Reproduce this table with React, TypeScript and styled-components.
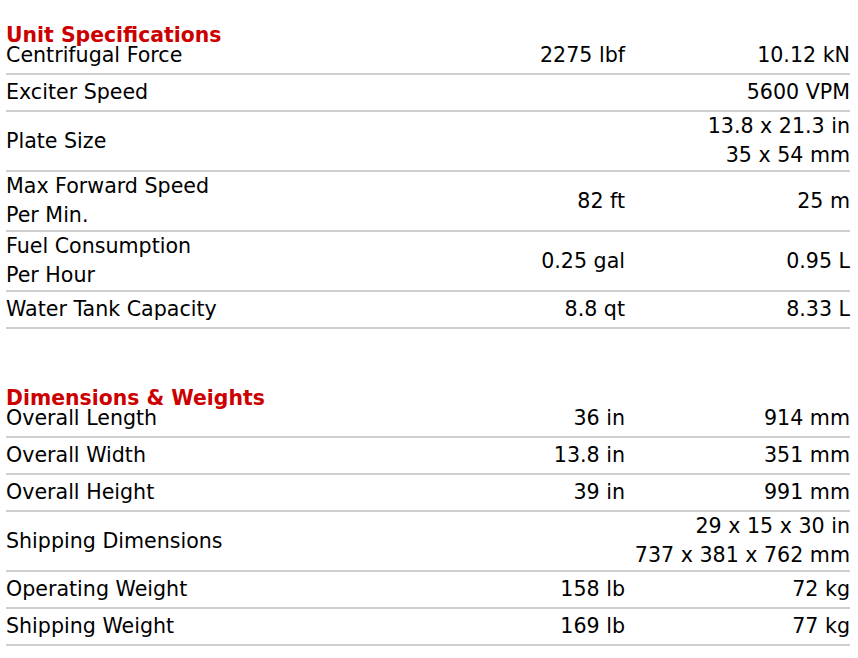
import styled, { createGlobalStyle } from 'styled-components';

const GlobalStyle = createGlobalStyle`
  body {
    margin: 0;
    background: #ffffff;
    font-family: "DejaVu Sans", Verdana, sans-serif;
    color: #000000;
  }
`;

const Page = styled.div`
  padding: 26px 8px 0 6px;
`;

const Section = styled.section`
  & + & {
    margin-top: 60px;
  }
`;

const Title = styled.h2`
  margin: 0;
  font-size: 20.4px;
  font-weight: bold;
  line-height: 18px;
  height: 12px;
  color: #cc0000;
`;

const Row = styled.div`
  display: grid;
  grid-template-columns: minmax(0, 1fr) 200px 225px;
  align-items: center;
  min-height: 35px;
  border-bottom: 2px solid #cfcfcf;
  font-size: 20.6px;
  line-height: 29px;
`;

const Label = styled.div`
  text-align: left;
`;

const Value = styled.div<{ $span?: boolean }>`
  text-align: right;
  grid-column: ${(p) => (p.$span ? '2 / 4' : 'auto')};
`;

type Spec = {
  label: string[];
  imperial?: string;
  metric?: string;
  combined?: string[];
};

const unitSpecs: Spec[] = [
  { label: ['Centrifugal Force'], imperial: '2275 lbf', metric: '10.12 kN' },
  { label: ['Exciter Speed'], combined: ['5600 VPM'] },
  { label: ['Plate Size'], combined: ['13.8 x 21.3 in', '35 x 54 mm'] },
  { label: ['Max Forward Speed', 'Per Min.'], imperial: '82 ft', metric: '25 m' },
  { label: ['Fuel Consumption', 'Per Hour'], imperial: '0.25 gal', metric: '0.95 L' },
  { label: ['Water Tank Capacity'], imperial: '8.8 qt', metric: '8.33 L' },
];

const dimensions: Spec[] = [
  { label: ['Overall Length'], imperial: '36 in', metric: '914 mm' },
  { label: ['Overall Width'], imperial: '13.8 in', metric: '351 mm' },
  { label: ['Overall Height'], imperial: '39 in', metric: '991 mm' },
  { label: ['Shipping Dimensions'], combined: ['29 x 15 x 30 in', '737 x 381 x 762 mm'] },
  { label: ['Operating Weight'], imperial: '158 lb', metric: '72 kg' },
  { label: ['Shipping Weight'], imperial: '169 lb', metric: '77 kg' },
];

const Lines = ({ lines }: { lines: string[] }) => (
  <>
    {lines.map((l, i) => (
      <div key={i}>{l}</div>
    ))}
  </>
);

const SpecTable = ({ title, rows }: { title: string; rows: Spec[] }) => (
  <Section>
    <Title>{title}</Title>
    {rows.map((r) => (
      <Row key={r.label.join(' ')}>
        <Label>
          <Lines lines={r.label} />
        </Label>
        {r.combined ? (
          <Value $span>
            <Lines lines={r.combined} />
          </Value>
        ) : (
          <>
            <Value>{r.imperial}</Value>
            <Value>{r.metric}</Value>
          </>
        )}
      </Row>
    ))}
  </Section>
);

const App = () => {
  return (
    <>
      <GlobalStyle />
      <Page>
        <SpecTable title="Unit Specifications" rows={unitSpecs} />
        <SpecTable title="Dimensions & Weights" rows={dimensions} />
      </Page>
    </>
  );
};

export default App;
